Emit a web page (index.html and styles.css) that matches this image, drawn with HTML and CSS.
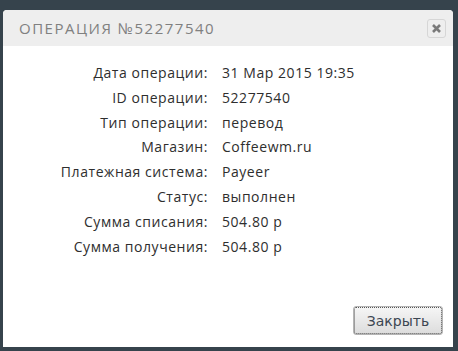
FILE: index.html
```html
<!DOCTYPE html>
<html lang="ru">
  <head>
    <meta charset="UTF-8" />
    <title>Операция №52277540</title>
    <link rel="stylesheet" href="styles.css">
  </head>
  <body>
    <div class="dialog">
      <div class="dialog-head">
        <span class="dialog-title">Операция №52277540</span>
        <button class="close" type="button" aria-label="Закрыть">
          <svg width="9" height="9" viewBox="0 0 9 9">
            <path d="M1 1 L8 8 M8 1 L1 8" stroke="#7a7a7a" stroke-width="2.6" />
          </svg>
        </button>
      </div>

      <div class="dialog-body">
        <div class="info">
          <span class="label">Дата операции:</span>
          <span class="value">31 Мар 2015 19:35</span>

          <span class="label">ID операции:</span>
          <span class="value">52277540</span>

          <span class="label">Тип операции:</span>
          <span class="value">перевод</span>

          <span class="label">Магазин:</span>
          <span class="value">Coffeewm.ru</span>

          <span class="label">Платежная система:</span>
          <span class="value">Payeer</span>

          <span class="label">Статус:</span>
          <span class="value">выполнен</span>

          <span class="label">Сумма списания:</span>
          <span class="value">504.80 р</span>

          <span class="label">Сумма получения:</span>
          <span class="value">504.80 р</span>
        </div>
      </div>

      <div class="dialog-foot">
        <button class="btn" type="button">Закрыть</button>
      </div>
    </div>
  </body>
</html>
```

FILE: styles.css
```css
body {
  margin: 0;
  height: 351px;
  background: #36434c;
  font-family: "Open Sans", "Liberation Sans", sans-serif;
  overflow: hidden;
}

.dialog {
  margin: 10px 0 0 3px;
  width: 450px;
  height: 337px;
  background: #fff;
  border-radius: 4px 4px 0 0;
  display: flex;
  flex-direction: column;
}

.dialog-head {
  height: 36px;
  background: #eeeeee;
  border-radius: 4px 4px 0 0;
  display: flex;
  align-items: center;
  justify-content: space-between;
  padding: 0 7px 0 16px;
}

.dialog-title {
  text-transform: uppercase;
  color: #808080;
  font-size: 15px;
  letter-spacing: 1.5px;
}

.close {
  width: 19px;
  height: 19px;
  padding: 0;
  border: 1px solid #d6d6d6;
  border-radius: 3px;
  background: #eeeeee;
  display: flex;
  align-items: center;
  justify-content: center;
}

.dialog-body {
  flex: 1;
  padding-top: 15px;
}

.info {
  display: grid;
  grid-template-columns: 205px auto;
  column-gap: 14px;
  font-size: 14px;
  line-height: 24.8px;
  letter-spacing: 0.55px;
  color: #2e2e2e;
}

.label {
  text-align: right;
}

.dialog-foot {
  display: flex;
  justify-content: flex-end;
  padding: 0 10px 12px 0;
}

.btn {
  width: 90px;
  height: 29px;
  border: 1px solid #b4b4b4;
  border-radius: 3px;
  outline: 1px dotted #555;
  outline-offset: -2px;
  background: linear-gradient(#f6f6f6, #dcdcdc);
  font-family: "DejaVu Sans", sans-serif;
  font-size: 14px;
  color: #3c4652;
}
```
